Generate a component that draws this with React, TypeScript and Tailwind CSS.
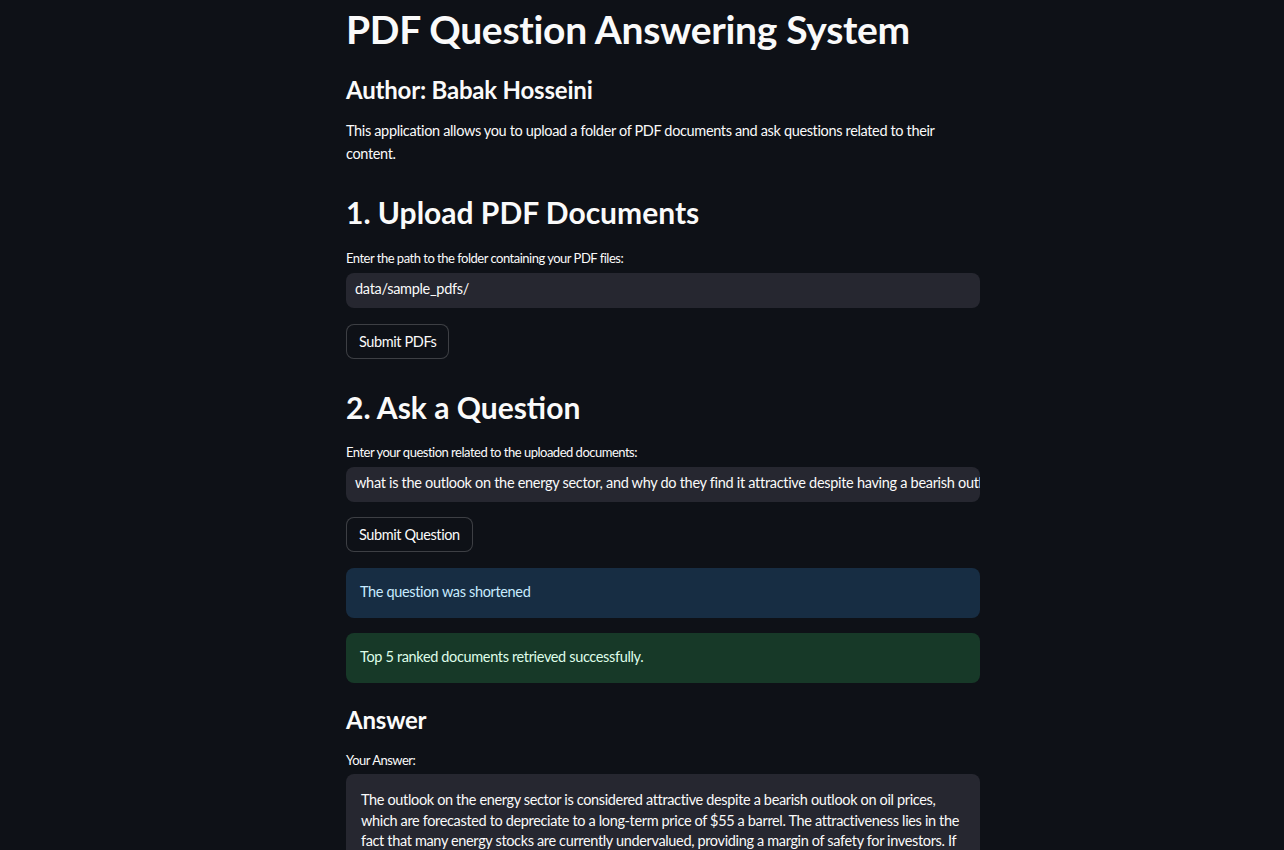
const font = { fontFamily: "Lato, 'Noto Sans', sans-serif" };

const question =
  "what is the outlook on the energy sector, and why do they find it attractive despite having a bearish outlook on oil prices?";

const answer =
  "The outlook on the energy sector is considered attractive despite a bearish outlook on oil prices, which are forecasted to depreciate to a long-term price of $55 a barrel. The attractiveness lies in the fact that many energy stocks are currently undervalued, providing a margin of safety for investors. If oil prices remain higher for longer, these companies could generate substantial free cash flow, which supports dividends and share buybacks.";

const Label = ({ text, className }: { text: string; className: string }) => (
  <p className={`text-[13px] leading-[20px] tracking-[-0.5px] text-[#fafafa] ${className}`}>{text}</p>
);

const Field = ({ value, className }: { value: string; className: string }) => (
  <div
    className={`h-[35px] rounded-lg bg-[#262730] px-[9px] text-[14.5px] leading-[32px] tracking-[-0.3px] text-[#fafafa] whitespace-nowrap overflow-hidden ${className}`}
  >
    {value}
  </div>
);

const Button = ({ text, className }: { text: string; className: string }) => (
  <button
    className={`self-start h-[35px] rounded-lg border border-[#fafafa]/20 bg-[#0e1117] px-3 text-[14.5px] leading-[32px] tracking-[-0.4px] text-[#fafafa] ${className}`}
  >
    {text}
  </button>
);

export default function App() {
  return (
    <div className="min-h-screen bg-[#0e1117] text-[#fafafa]" style={font}>
      <main className="ml-[346px] w-[634px] flex flex-col pt-[4px] pb-16">
        <h1 className="text-[39px] leading-[50px] tracking-[-0.3px] font-bold">PDF Question Answering System</h1>
        <h3 className="mt-[20px] text-[24px] leading-[32px] tracking-[-0.2px] font-bold">Author: Babak Hosseini</h3>
        <p className="mt-[13px] text-[14.5px] leading-[23px] tracking-[-0.35px]">
          This application allows you to upload a folder of PDF documents and ask questions related to their
          content.
        </p>

        <h2 className="mt-[29px] text-[30px] leading-[36px] font-bold">1. Upload PDF Documents</h2>
        <Label className="mt-[18px]" text="Enter the path to the folder containing your PDF files:" />
        <Field className="mt-[5px]" value="data/sample_pdfs/" />
        <Button className="mt-[16px]" text="Submit PDFs" />

        <h2 className="mt-[30px] text-[30px] leading-[36px] font-bold">2. Ask a Question</h2>
        <Label className="mt-[17px]" text="Enter your question related to the uploaded documents:" />
        <Field className="mt-[5px]" value={question} />
        <Button className="mt-[15px]" text="Submit Question" />

        <div className="mt-[16px] h-[50px] rounded-lg bg-[#172d43] px-[14px] pt-[12px] text-[14.5px] leading-6 tracking-[-0.35px] text-[#c7ebff]">
          The question was shortened
        </div>
        <div className="mt-[15px] h-[50px] rounded-lg bg-[#173928] px-[14px] pt-[12px] text-[14.5px] leading-6 tracking-[-0.35px] text-[#dffde9]">
          Top 5 ranked documents retrieved successfully.
        </div>

        <h3 className="mt-[21px] text-[24px] leading-[32px] tracking-[-0.2px] font-bold">Answer</h3>
        <Label className="mt-[14px]" text="Your Answer:" />
        <div className="mt-[4px] rounded-lg bg-[#262730] px-[15px] pt-[16px] pb-4 text-[14.5px] leading-[20.5px] tracking-[-0.35px]">
          {answer}
        </div>
      </main>
    </div>
  );
}
